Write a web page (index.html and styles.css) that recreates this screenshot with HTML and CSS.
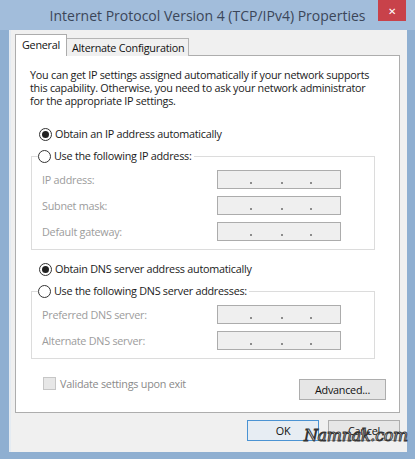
FILE: index.html
```html
<!DOCTYPE html>
<html lang="en">
<head>
    <meta charset="UTF-8">
    <meta name="viewport" content="width=device-width, initial-scale=1.0">
    <title>Internet Protocol Version 4 (TCP/IPv4) Properties</title>
    <link rel="stylesheet" href="styles.css">
</head>
<body>
<div class="window">
    <div class="titlebar">
        <span class="title">Internet Protocol Version 4 (TCP/IPv4) Properties</span>
        <span class="close-btn">&#x2715;</span>
    </div>

    <div class="dialog">
        <div class="tabs">
            <div class="tab active">General</div>
            <div class="tab">Alternate Configuration</div>
        </div>

        <div class="panel">
            <p class="intro">You can get IP settings assigned automatically if your network supports<br>this capability. Otherwise, you need to ask your network administrator<br>for the appropriate IP settings.</p>

            <div class="radio-row first"><span class="radio checked"></span>Obtain an IP address automatically</div>

            <fieldset class="group">
                <legend class="radio-row"><span class="radio"></span>Use the following IP address:</legend>
                <div class="field"><span class="field-label">IP address:</span><span class="ip-box"><i></i><i></i><i></i></span></div>
                <div class="field"><span class="field-label">Subnet mask:</span><span class="ip-box"><i></i><i></i><i></i></span></div>
                <div class="field"><span class="field-label">Default gateway:</span><span class="ip-box"><i></i><i></i><i></i></span></div>
            </fieldset>

            <div class="radio-row dns"><span class="radio checked"></span>Obtain DNS server address automatically</div>

            <fieldset class="group">
                <legend class="radio-row"><span class="radio"></span>Use the following DNS server addresses:</legend>
                <div class="field"><span class="field-label">Preferred DNS server:</span><span class="ip-box"><i></i><i></i><i></i></span></div>
                <div class="field"><span class="field-label">Alternate DNS server:</span><span class="ip-box"><i></i><i></i><i></i></span></div>
            </fieldset>

            <div class="bottom-row">
                <div class="check-row"><span class="checkbox"></span>Validate settings upon exit</div>
                <button class="btn advanced">Advanced...</button>
            </div>
        </div>

        <div class="footer">
            <button class="btn default">OK</button>
            <button class="btn">Cancel</button>
            <span class="watermark">Namnak.com</span>
        </div>
    </div>
</div>
</body>
</html>
```

FILE: styles.css
```css
body {
    margin: 0;
    font-family: "Open Sans", "Noto Sans", sans-serif;
    font-size: 10.8px;
    letter-spacing: -0.25px;
    color: #1a1a1a;
}
.window {
    width: 415px;
    height: 459px;
    box-sizing: border-box;
    background: #8fafd1;
    padding: 0 8px 7px 9px;
    display: flex;
    flex-direction: column;
}
.titlebar {
    height: 30px;
    position: relative;
    display: flex;
    align-items: center;
    justify-content: center;
    background: #a2bddb;
    margin: 0 -8px 0 -9px;
}
.title {
    font-size: 14px;
    letter-spacing: 0;
    color: #3b4659;
    margin-top: 1px;
}
.close-btn {
    position: absolute;
    top: 0;
    right: 9px;
    width: 28px;
    height: 21px;
    background: #c8424a;
    color: #fff;
    font-size: 10px;
    display: flex;
    align-items: center;
    justify-content: center;
}
.dialog {
    flex: 1;
    background: #f0f0f0;
    border-left: 2px solid #e4ebf2;
    padding: 5px 7px 0 4px;
    display: flex;
    flex-direction: column;
    position: relative;
}
.tabs {
    display: flex;
    align-items: flex-end;
    height: 21px;
    margin-bottom: -1px;
    position: relative;
    z-index: 1;
}
.tab {
    border: 1px solid #b4b4b4;
    border-bottom: none;
    padding: 0 4px 0 5px;
    height: 17px;
    line-height: 17px;
    background: #f0f0f0;
    color: #111;
}
.tab.active {
    background: #fff;
    height: 21px;
    line-height: 20px;
    padding: 0 6px;
    margin-left: 0;
    border-color: #acacac;
}
.tab + .tab {
    border-left: none;
}
.panel {
    background: #fff;
    border: 1px solid #adadad;
    height: 358px;
    box-sizing: border-box;
    padding: 12px 13px 0 14px;
    display: flex;
    flex-direction: column;
}
.intro {
    margin: 0;
    line-height: 13px;
    white-space: nowrap;
}
.radio-row {
    display: flex;
    align-items: center;
    height: 16px;
    line-height: 16px;
    padding-left: 9px;
}
.radio-row.first {
    margin-top: 19px;
}
.radio-row.dns {
    margin-top: 11px;
}
.radio {
    width: 11px;
    height: 11px;
    border: 1px solid #333;
    border-radius: 50%;
    background: #fff;
    margin-right: 3px;
    position: relative;
    flex: none;
}
.radio.checked::after {
    content: "";
    position: absolute;
    left: 2px;
    top: 2px;
    width: 7px;
    height: 7px;
    border-radius: 50%;
    background: #222;
}
.group {
    margin: 6px 11px 0 1px;
    border: 1px solid #dcdcdc;
    padding: 6px 0 8px 10px;
    display: flex;
    flex-direction: column;
    gap: 7px;
}
.group legend.radio-row {
    padding: 0 2px 0 0;
    margin-left: -4px;
}
.field {
    display: flex;
    align-items: center;
    height: 19px;
}
.field-label {
    width: 175px;
    color: #9c9c9c;
}
.ip-box {
    width: 122px;
    height: 17px;
    border: 1px solid #acacac;
    background: #efefef;
    position: relative;
}
.ip-box i {
    position: absolute;
    top: 11px;
    width: 2px;
    height: 2px;
    background: #8c8c8c;
}
.ip-box i:nth-child(1) { left: 32px; }
.ip-box i:nth-child(2) { left: 63px; }
.ip-box i:nth-child(3) { left: 92px; }
.bottom-row {
    display: flex;
    justify-content: space-between;
    align-items: flex-start;
    margin-top: 17px;
}
.check-row {
    display: flex;
    align-items: center;
    color: #8a8a8a;
    padding-left: 13px;
    height: 14px;
}
.checkbox {
    width: 11px;
    height: 11px;
    border: 1px solid #c6c6c6;
    background: #e7e7e7;
    margin-right: 4px;
}
.btn {
    font-family: inherit;
    font-size: 10.8px;
    letter-spacing: -0.25px;
    color: #111;
    background: #e6e6e6;
    border: 1px solid #adadad;
    height: 21px;
    width: 72px;
    padding: 0;
}
.btn.advanced {
    width: 87px;
    margin-top: 3px;
}
.btn.default {
    border-color: #4b93d3;
    background: #e7edf3;
}
.footer {
    display: flex;
    justify-content: flex-end;
    gap: 9px;
    padding-top: 7px;
    position: relative;
}
.watermark {
    position: absolute;
    right: -8px;
    top: 13px;
    font-family: "DejaVu Serif", serif;
    font-style: italic;
    font-size: 16px;
    color: #fff;
    -webkit-text-stroke: 1px #333;
    letter-spacing: -0.3px;
}
```
